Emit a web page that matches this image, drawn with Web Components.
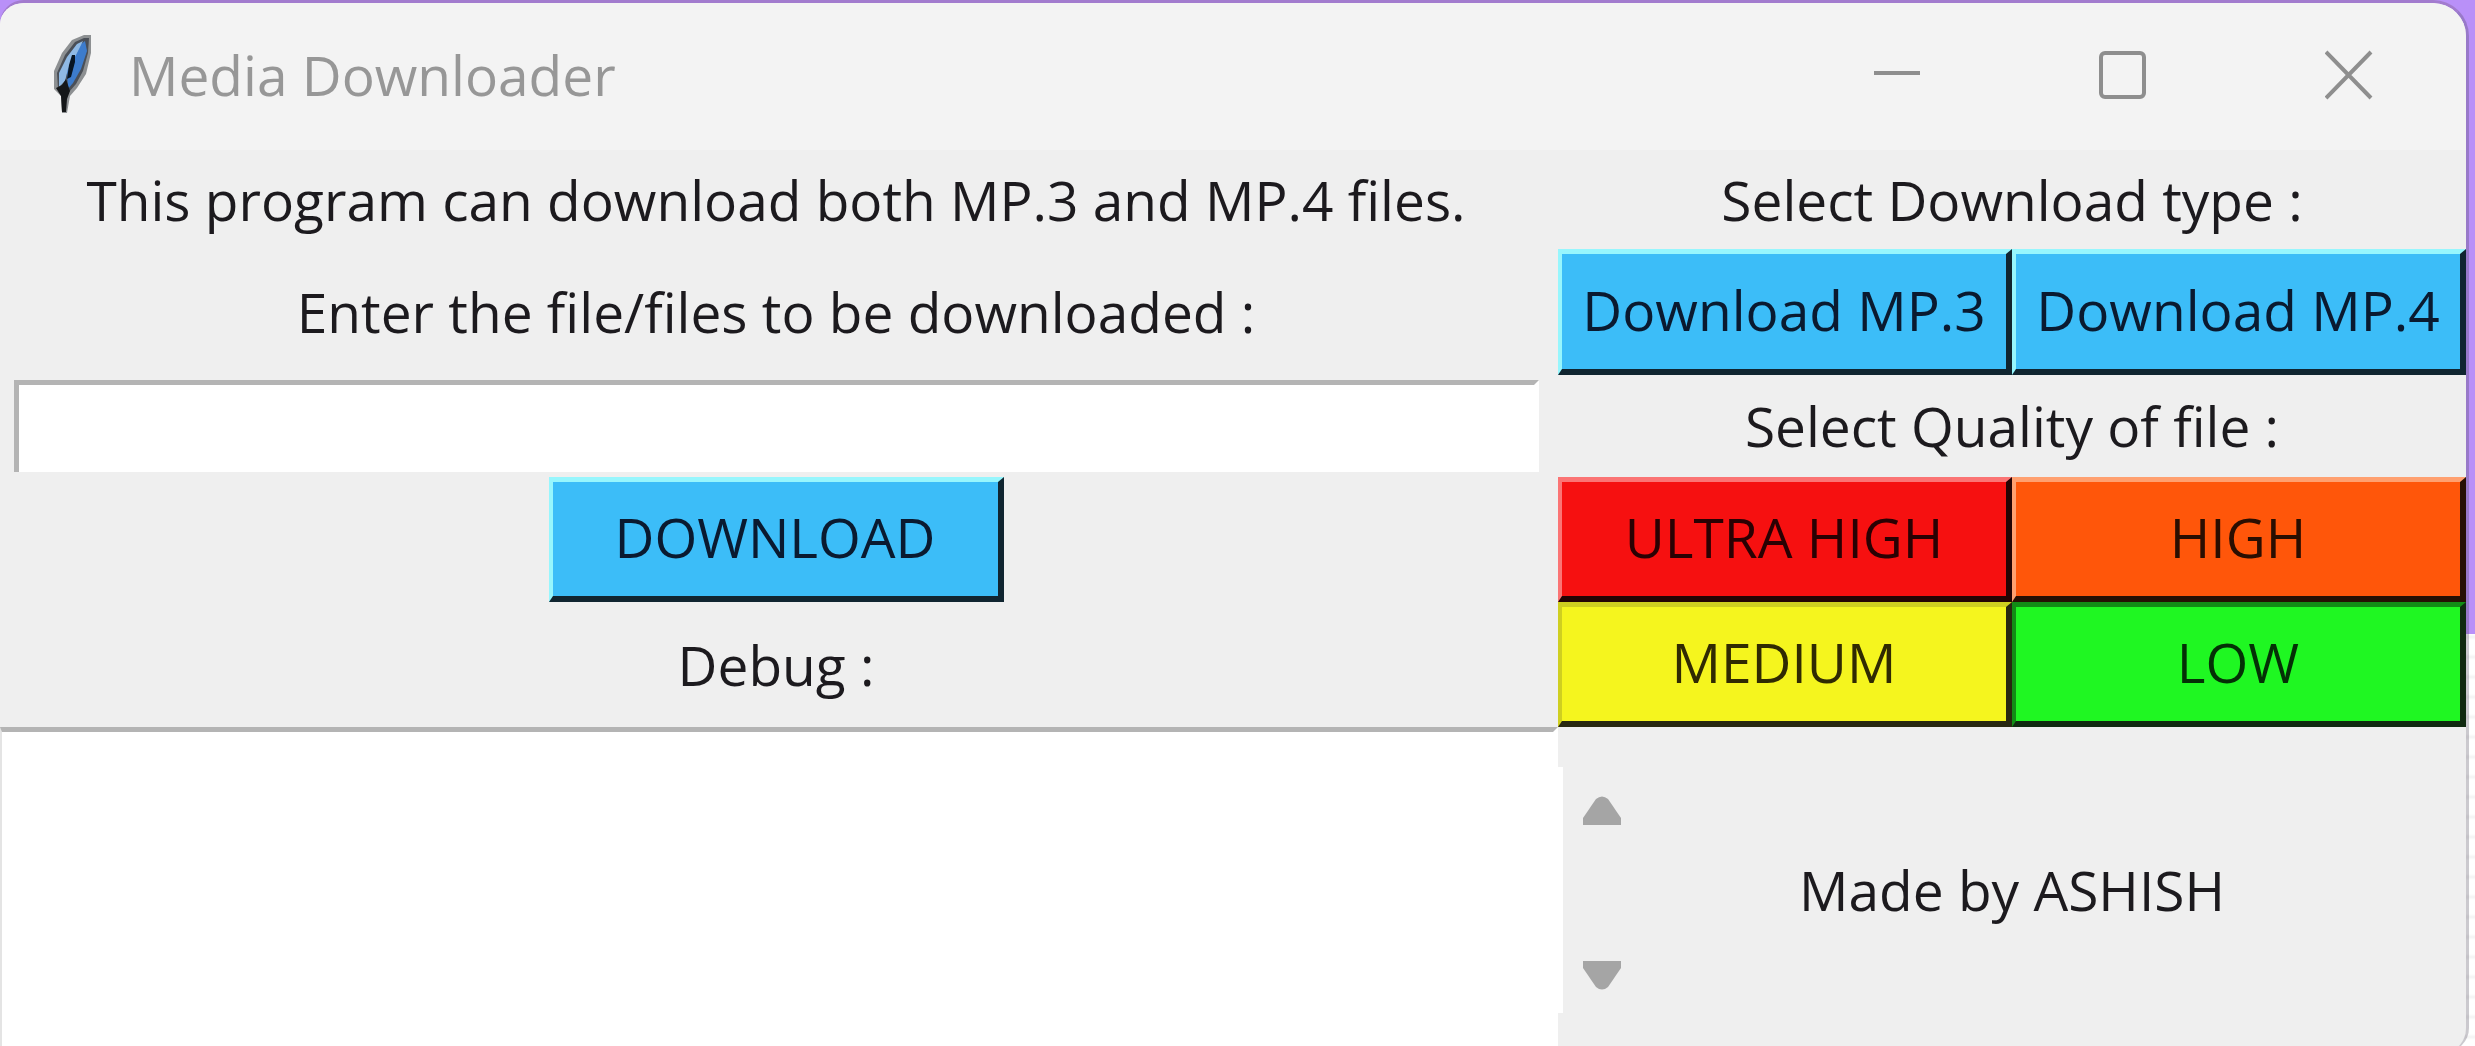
<!DOCTYPE html>
<html lang="en">
<head>
<meta charset="utf-8">
<title>Media Downloader</title>
<style>
html, body { height: 100%; margin: 0; overflow: hidden; }
body {
  font-family: "Open Sans", "Noto Sans", sans-serif;
  font-size: 55px;
  line-height: 72px;
  color: #1c1a1e;
  background:
    linear-gradient(#b990f8 634px, transparent 634px),
    repeating-linear-gradient(#fff 0 14px, #f3f3f3 17px, #fff 20px);
}
</style>
</head>
<body>
<app-window>
  <title-bar slot="title">Media Downloader</title-bar>
  <download-form></download-form>
</app-window>

<script>
const define = (name, html) => customElements.define(name, class extends HTMLElement {
  constructor() {
    super();
    this.attachShadow({ mode: "open" }).innerHTML = html;
  }
});

define("app-window", `
<style>
  :host {
    display: flex; flex-direction: column; box-sizing: border-box;
    height: calc(100vh + 6px); margin-right: 6px;
    border-top: 3px solid #a27bce; border-right: 3px solid rgba(70, 60, 80, .28);
    border-radius: 24px 36px 24px 0; overflow: hidden;
    background: #efefef; background-clip: padding-box;
  }
  main { flex: 1; display: flex; min-height: 0; }
</style>
<slot name="title"></slot>
<main><slot></slot></main>`);

define("title-bar", `
<style>
  :host { display: flex; align-items: center; flex: 0 0 147px; box-sizing: border-box;
    padding: 0 4px 4px 50px; background: #f3f3f3; color: #979797; }
  h1 { flex: 1; margin: 0 0 0 34px; font: inherit; }
  .feather { width: 45px; height: 84px; margin-bottom: 4px; }
  button { width: 226px; height: 140px; border: 0; padding: 0; background: none;
    display: grid; place-items: center; }
  button svg { width: 48px; height: 50px; fill: none; stroke: #8e8e8e; stroke-width: 4; }
</style>
<svg class="feather" viewBox="0 0 45 84" aria-hidden="true">
  <path d="M34 4 L41 4 L41 22 L36 43 L27 57 L20 65 L17 82 L12 82 L11 65 L4 58 L4 40 L12 22 L22 9 Z" fill="#8d9092"/>
  <path d="M34 7 L39 7 L38 22 L33 40 L26 53 L19 61 L8 58 L7 42 L15 24 L25 11 Z" fill="#4a4f57"/>
  <path d="M35 10 L37 20 L31 38 L23 52 L18 58 L17 40 L25 18 Z" fill="#3d7ccc"/>
  <path d="M33 10 L26 24 L18 38 L15 50 L9 56 L9 42 L17 26 L27 13 Z" fill="#8fb9e4"/>
  <path d="M22 24 L25 24 L25 31 L21 46 L17 48 L19 34 Z" fill="#081523"/>
  <path d="M6 57 L12 54 L16 48 L20 60 L17 68 L16 81 L12 81 L11 65 Z" fill="#151719"/>
</svg>
<h1><slot></slot></h1>
<button type="button" aria-label="Minimize"><svg viewBox="0 0 48 50"><path d="M1 23H47"/></svg></button>
<button type="button" aria-label="Maximize"><svg viewBox="0 0 48 50"><rect x="2" y="3" width="43" height="44" rx="4"/></svg></button>
<button type="button" aria-label="Close"><svg viewBox="0 0 48 50"><path d="M1 2L46 48M46 2L1 48"/></svg></button>`);

define("bevel-button", `
<style>
  :host { display: flex; --face: #3cbdf8; --light: #97f6fd; --dark: #102530; --ink: #0a1a30; }
  :host([tone=red]) { --face: #f61010; --light: #fb7474; --dark: #240404; --ink: #2a0103; }
  :host([tone=orange]) { --face: #ff560a; --light: #ffa070; --dark: #261004; --ink: #2a0e01; }
  :host([tone=yellow]) { --face: #f5f51e; --light: #cfcf20; --dark: #282810; --ink: #302a02; }
  :host([tone=green]) { --face: #1ff722; --light: #128c16; --dark: #102a10; --ink: #043006; }
  button { flex: 1; min-width: 0; box-sizing: border-box; padding: 0 0 4px; font: inherit; white-space: nowrap;
    color: var(--ink); background: var(--face); border: solid; border-width: 5px 6px 6px 4px;
    border-color: var(--light) var(--dark) var(--dark) var(--light); }
</style>
<button type="button"><slot></slot></button>`);

define("scroll-arrows", `
<style>
  :host { display: flex; flex-direction: column; justify-content: space-between; box-sizing: border-box;
    width: 82px; height: 246px; padding: 22px 0 16px; border-left: 5px solid #fff; }
  button { border: 0; background: none; padding: 0; height: 44px; display: grid; place-items: center; }
  svg { width: 40px; height: 30px; fill: #a5a5a5; }
</style>
<button type="button" aria-label="Scroll up"><svg viewBox="0 0 40 30"><path d="M1 29H39V22L26 3Q20 -2 14 3L1 22Z"/></svg></button>
<button type="button" aria-label="Scroll down"><svg viewBox="0 0 40 30"><path d="M1 1H39V8L26 27Q20 32 14 27L1 8Z"/></svg></button>`);

define("download-form", `
<style>
  :host { flex: 1; display: grid; min-width: 0;
    grid-template-columns: minmax(0, 1558fr) minmax(0, 454fr) minmax(0, 454fr);
    grid-template-rows: 99px 126px 102px 125px 125px minmax(0, 1fr); }
  p, label { margin: 0; place-self: center; white-space: nowrap; }
  .left { grid-column: 1; margin-right: 6px; }
  .wide { grid-column: 2 / 4; }
  .r1 { grid-row: 1; } .r2 { grid-row: 2; } .r3 { grid-row: 3; }
  .r4 { grid-row: 4; } .r5 { grid-row: 5; } .r6 { grid-row: 6; }
  input, textarea { box-sizing: border-box; border: solid; border-radius: 0; background: #fff;
    font: inherit; color: inherit; outline: 0; resize: none; }
  input { grid-column: 1; height: 92px; align-self: center; margin: 0 19px 0 14px; padding: 0 8px;
    border-width: 5px 5px 0 5px; border-color: #b4b4b4 #fff #fff #b4b4b4; }
  textarea { grid-column: 1; margin: 0; padding: 8px;
    border-width: 5px 5px 0 2px; border-color: #b4b4b4 #fff #fff #e4e4e4; }
  .submit { justify-self: center; width: 455px; }
  scroll-arrows { grid-column: 2; place-self: center start; }
</style>
<p class="left r1">This program can download both MP.3 and MP.4 files.</p>
<label class="left r2" for="files">Enter the file/files to be downloaded :</label>
<input class="r3" id="files" type="text">
<bevel-button class="left r4 submit">DOWNLOAD</bevel-button>
<label class="left r5" for="debug">Debug :</label>
<textarea class="r6" id="debug"></textarea>
<p class="wide r1">Select Download type :</p>
<bevel-button class="r2">Download MP.3</bevel-button>
<bevel-button class="r2">Download MP.4</bevel-button>
<p class="wide r3">Select Quality of file :</p>
<bevel-button class="r4" tone="red">ULTRA HIGH</bevel-button>
<bevel-button class="r4" tone="orange">HIGH</bevel-button>
<bevel-button class="r5" tone="yellow">MEDIUM</bevel-button>
<bevel-button class="r5" tone="green">LOW</bevel-button>
<scroll-arrows class="r6"></scroll-arrows>
<p class="wide r6">Made by ASHISH</p>`);
</script>
</body>
</html>
